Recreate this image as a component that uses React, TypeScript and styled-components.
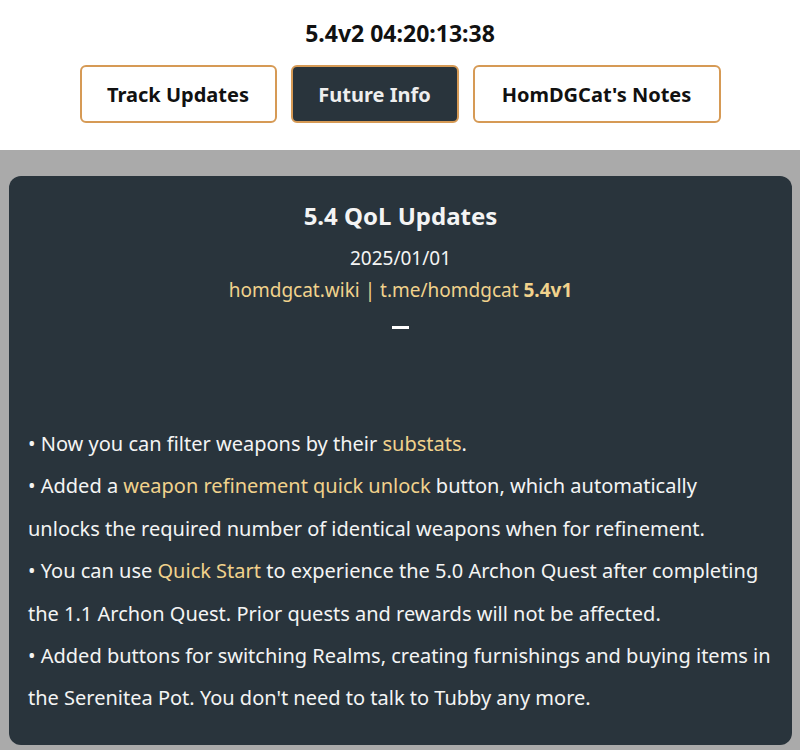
import React from 'react'
import styled, { createGlobalStyle } from 'styled-components'

const GlobalStyle = createGlobalStyle`
  html, body {
    margin: 0;
    padding: 0;
    background: #aaaaaa;
    font-family: "Noto Sans", "Open Sans", sans-serif;
  }
`

const Header = styled.header`
  background: #ffffff;
  height: 150px;
  display: flex;
  flex-direction: column;
  align-items: center;
  box-sizing: border-box;
  padding-top: 20px;
`

const Clock = styled.div`
  font-size: 23px;
  font-weight: 700;
  color: #111;
  line-height: 26px;
`

const Tabs = styled.nav`
  display: flex;
  gap: 14px;
  margin-top: 19px;
`

const Tab = styled.button<{ $active?: boolean; $w: number }>`
  width: ${p => p.$w}px;
  height: 58px;
  border: 2px solid #d69a55;
  border-radius: 6px;
  background: ${p => (p.$active ? '#29343c' : '#ffffff')};
  color: ${p => (p.$active ? '#eeeeee' : '#111')};
  font-family: inherit;
  font-size: 20px;
  font-weight: 700;
  cursor: pointer;
`

const Main = styled.main`
  padding: 26px 8px 8px 9px;
`

const Card = styled.article`
  background: #29343c;
  border-radius: 12px;
  padding: 25px 19px 25px 19px;
  color: #f4f4f4;
`

const Title = styled.h2`
  margin: 0;
  text-align: center;
  font-size: 24px;
  font-weight: 700;
  line-height: 30px;
`

const Meta = styled.div`
  text-align: center;
  font-size: 19px;
  line-height: 32px;
  margin-top: 11px;
`

const Gold = styled.span<{ $bold?: boolean }>`
  color: #f1d28c;
  font-weight: ${p => (p.$bold ? 700 : 400)};
`

const Dash = styled.div`
  width: 17px;
  height: 3px;
  background: #fff;
  margin: 20px auto 94px;
`

const Notes = styled.div`
  font-size: 20px;
  line-height: 42.4px;
`

const Line = styled.p`
  margin: 0;
`

const App = () => {
  return (
    <>
      <GlobalStyle />
      <Header>
        <Clock>5.4v2 04:20:13:38</Clock>
        <Tabs>
          <Tab $w={197}>Track Updates</Tab>
          <Tab $w={168} $active>Future Info</Tab>
          <Tab $w={248}>HomDGCat's Notes</Tab>
        </Tabs>
      </Header>
      <Main>
        <Card>
          <Title>5.4 QoL Updates</Title>
          <Meta>
            2025/01/01
            <br />
            <Gold>homdgcat.wiki | t.me/homdgcat </Gold>
            <Gold $bold>5.4v1</Gold>
          </Meta>
          <Dash />
          <Notes>
            <Line>• Now you can filter weapons by their <Gold>substats</Gold>.</Line>
            <Line>
              • Added a <Gold>weapon refinement quick unlock</Gold> button, which automatically unlocks the required number of identical weapons when for refinement.
            </Line>
            <Line>
              • You can use <Gold>Quick Start</Gold> to experience the 5.0 Archon Quest after completing the 1.1 Archon Quest. Prior quests and rewards will not be affected.
            </Line>
            <Line>
              • Added buttons for switching Realms, creating furnishings and buying items in the Serenitea Pot. You don't need to talk to Tubby any more.
            </Line>
          </Notes>
        </Card>
      </Main>
    </>
  )
}

export default App
